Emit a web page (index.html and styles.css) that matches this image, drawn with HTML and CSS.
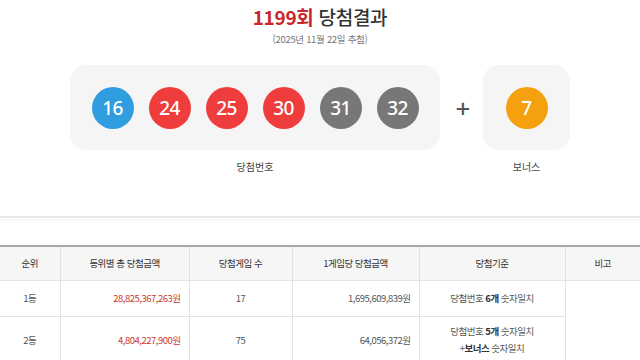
FILE: index.html
```html
<!DOCTYPE html>
<html lang="ko">
<head>
<meta charset="utf-8">
<link rel="stylesheet" href="styles.css">
</head>
<body>
<section class="result">
  <h1 class="title"><strong>1199회</strong> 당첨결과</h1>
  <p class="date">(2025년 11월 22일 추첨)</p>
  <div class="draw">
    <div class="group">
      <div class="panel main">
        <span class="ball blue">16</span>
        <span class="ball red">24</span>
        <span class="ball red">25</span>
        <span class="ball red">30</span>
        <span class="ball gray">31</span>
        <span class="ball gray">32</span>
      </div>
      <p class="label">당첨번호</p>
    </div>
    <div class="plus">+</div>
    <div class="group">
      <div class="panel bonus">
        <span class="ball orange">7</span>
      </div>
      <p class="label">보너스</p>
    </div>
  </div>
</section>
<div class="divider"></div>
<table class="prize">
  <colgroup>
    <col class="c1"><col class="c2"><col class="c3"><col class="c4"><col class="c5"><col class="c6">
  </colgroup>
  <thead>
    <tr><th>순위</th><th>등위별 총 당첨금액</th><th>당첨게임 수</th><th>1게임당 당첨금액</th><th>당첨기준</th><th>비고</th></tr>
  </thead>
  <tbody>
    <tr class="r1">
      <td>1등</td><td class="amt red-text">28,825,367,263원</td><td>17</td><td class="amt">1,695,609,839원</td><td>당첨번호 <b>6개</b> 숫자일치</td><td rowspan="2" class="note"></td>
    </tr>
    <tr class="r2">
      <td>2등</td><td class="amt red-text">4,804,227,900원</td><td>75</td><td class="amt">64,056,372원</td><td>당첨번호 <b>5개</b> 숫자일치<br>+<b>보너스</b> 숫자일치</td>
    </tr>
  </tbody>
</table>
</body>
</html>
```
FILE: styles.css
```css
* { box-sizing: border-box; }
html, body { margin: 0; padding: 0; background: #fff; }
body {
  font-family: "Noto Sans CJK KR", "Noto Sans", sans-serif;
  color: #555;
  width: 640px;
  overflow: hidden;
}
.result { text-align: center; }
.title {
  margin: 5px 0 0;
  font-size: 19px;
  line-height: 24px;
  font-weight: 500;
  color: #333;
  letter-spacing: -0.3px;
}
.title strong { color: #c8282b; font-weight: 700; }
.date {
  margin: 3px 0 0;
  font-size: 9.5px;
  line-height: 14px;
  color: #777;
  letter-spacing: -0.3px;
}
.draw {
  display: flex;
  justify-content: center;
  align-items: flex-start;
  margin-top: 19px;
}
.group { display: flex; flex-direction: column; align-items: center; }
.panel {
  background: #f5f5f5;
  border-radius: 16px;
  height: 85px;
  display: flex;
  align-items: center;
  justify-content: center;
}
.main { width: 370px; gap: 15px; }
.bonus { width: 87px; }
.ball {
  width: 42px;
  height: 42px;
  border-radius: 50%;
  display: flex;
  align-items: center;
  justify-content: center;
  color: #fff;
  font-family: "Noto Sans", sans-serif;
  font-size: 19px;
  font-weight: 500;
  letter-spacing: -0.5px;
}
.blue { background: #2f9de0; }
.red { background: #ef3c3c; }
.gray { background: #777; }
.orange { background: #f5a00f; }
.plus {
  width: 43px;
  height: 85px;
  display: flex;
  align-items: center;
  justify-content: center;
  font-family: "Noto Sans", sans-serif;
  font-size: 26px;
  font-weight: 500;
  color: #555;
  padding-left: 3px;
}
.label {
  margin: 10px 0 0;
  font-size: 10px;
  line-height: 14px;
  color: #444;
}
.divider {
  margin-top: 42px;
  height: 4px;
  border-top: 2px solid #e8e8e8;
  border-bottom: 1px solid #f3f3f3;
}
.prize {
  margin-top: 25px;
  width: 640px;
  border-collapse: collapse;
  table-layout: fixed;
  border-top: 2px solid #a8a8a8;
  font-size: 9.5px;
  letter-spacing: -0.5px;
}
.c1 { width: 60px; }
.c2 { width: 129px; }
.c3 { width: 103px; }
.c4 { width: 127px; }
.c5 { width: 146px; }
.c6 { width: 75px; }
.prize th, .prize td {
  border: 1px solid #e2e2e2;
  text-align: center;
  padding: 0 8px;
  color: #555;
  font-weight: 400;
}
.prize th:first-child, .prize td:first-child { border-left: none; }
.prize th:last-child { border-right: none; }
.prize .note { border-right: none; }
.prize th {
  background: #f6f6f6;
  height: 34px;
  color: #333;
}
.r1 td { height: 36px; }
.r2 td { height: 48px; line-height: 17px; }
.prize td.amt { text-align: right; }
.prize td.red-text { color: #cc3a2a; }
.prize b { font-weight: 700; color: #333; }
```
